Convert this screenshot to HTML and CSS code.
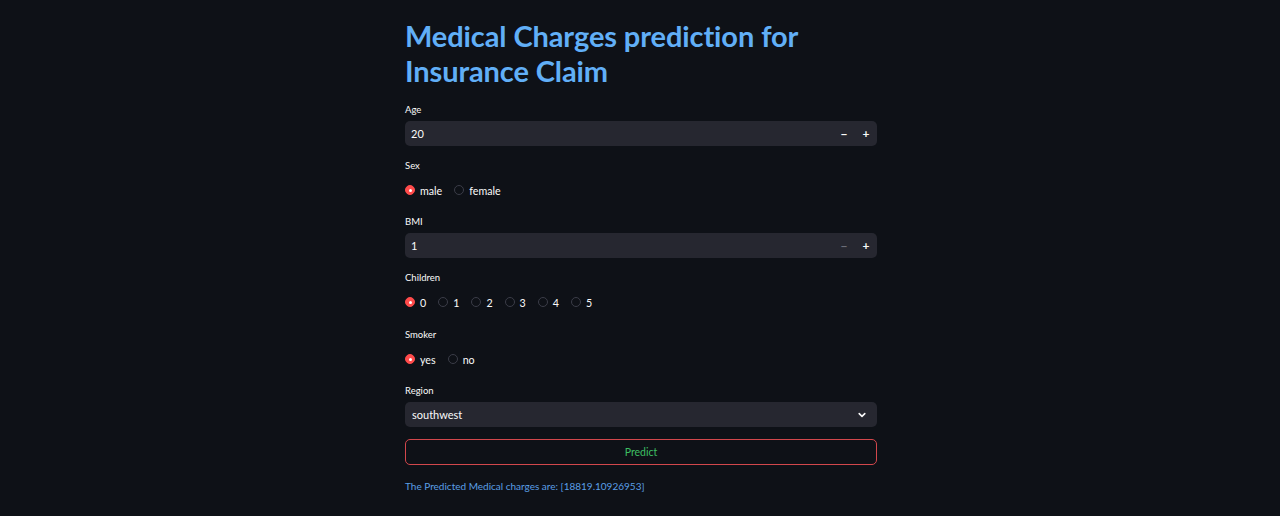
FILE: index.html
```html
<!DOCTYPE html>
<html lang="en">
<head>
<meta charset="utf-8">
<title>Medical Charges prediction</title>
<link rel="stylesheet" href="styles.css">
</head>
<body>
<main class="block">
  <h1 class="title">Medical Charges prediction for Insurance Claim</h1>

  <div class="field">
    <div class="label">Age</div>
    <div class="number">
      <span class="value">20</span>
      <span class="step">&minus;</span>
      <span class="step">+</span>
    </div>
  </div>

  <div class="field radio-field">
    <div class="label">Sex</div>
    <div class="radios">
      <span class="opt"><span class="dot on"></span>male</span>
      <span class="opt"><span class="dot"></span>female</span>
    </div>
  </div>

  <div class="field">
    <div class="label">BMI</div>
    <div class="number">
      <span class="value">1</span>
      <span class="step dim">&minus;</span>
      <span class="step">+</span>
    </div>
  </div>

  <div class="field radio-field wide">
    <div class="label">Children</div>
    <div class="radios">
      <span class="opt"><span class="dot on"></span>0</span>
      <span class="opt"><span class="dot"></span>1</span>
      <span class="opt"><span class="dot"></span>2</span>
      <span class="opt"><span class="dot"></span>3</span>
      <span class="opt"><span class="dot"></span>4</span>
      <span class="opt"><span class="dot"></span>5</span>
    </div>
  </div>

  <div class="field radio-field">
    <div class="label">Smoker</div>
    <div class="radios">
      <span class="opt"><span class="dot on"></span>yes</span>
      <span class="opt"><span class="dot"></span>no</span>
    </div>
  </div>

  <div class="field">
    <div class="label">Region</div>
    <div class="select">
      <span class="value">southwest</span>
      <svg class="chev" width="10" height="10" viewBox="0 0 10 10"><path d="M2.2 3.6 L5 6.4 L7.8 3.6" fill="none" stroke="#fafafa" stroke-width="1.6" stroke-linecap="round" stroke-linejoin="round"/></svg>
    </div>
  </div>

  <button class="predict" type="button">Predict</button>

  <p class="result">The Predicted Medical charges are: [18819.10926953]</p>
</main>
</body>
</html>
```

FILE: styles.css
```css
* { box-sizing: border-box; }
html, body { margin: 0; padding: 0; }
body {
  background: #0e1117;
  color: #fafafa;
  font-family: Lato, "Liberation Sans", sans-serif;
  height: 516px;
  overflow: hidden;
}
.block {
  width: 472px;
  margin-left: 405px;
  padding-top: 18px;
}
.title {
  margin: 0 0 14px 0;
  font-size: 29px;
  line-height: 35px;
  font-weight: 700;
  color: #61aff7;
  letter-spacing: -0.1px;
}
.field { margin-bottom: 12px; }
.radio-field { margin-bottom: 17px; }
.radio-field.wide { margin-bottom: 18px; }
.label {
  font-size: 9.5px;
  line-height: 14px;
  height: 14px;
  padding-top: 1px;
  margin-bottom: 5px;
  color: #fafafa;
}
.radio-field .label { margin-bottom: 11px; }
.number, .select {
  height: 25px;
  background: #262730;
  border-radius: 5px;
  display: flex;
  align-items: center;
  font-size: 11px;
}
.number .value { flex: 1; padding-left: 6px; }
.select .value { flex: 1; padding-left: 7px; }
.step {
  width: 22px;
  text-align: center;
  font-size: 12px;
  font-weight: 700;
  color: #fafafa;
}
.step.dim { color: #6b6d78; }
.chev { margin-right: 10px; }
.radios {
  display: flex;
  gap: 12px;
  height: 14px;
  align-items: center;
  font-size: 10.7px;
}
.opt { display: flex; align-items: center; gap: 5px; }
.dot {
  width: 10px;
  height: 10px;
  border-radius: 50%;
  border: 1px solid #3b3d48;
  background: #0e1117;
  display: inline-block;
}
.dot.on {
  background: #ff4b4b;
  border-color: #ff4b4b;
  position: relative;
}
.dot.on::after {
  content: "";
  position: absolute;
  left: 2.5px; top: 2.5px;
  width: 3px; height: 3px;
  border-radius: 50%;
  background: #ffffff;
}
.predict {
  display: block;
  width: 100%;
  height: 26px;
  background: #0e1117;
  border: 1px solid #d2474c;
  border-radius: 5px;
  color: #3dbf63;
  font-family: inherit;
  font-size: 10.5px;
  margin: 0 0 13px 0;
}
.result {
  margin: 0;
  font-size: 10px;
  line-height: 14px;
  padding-top: 1px;
  color: #5a9fe6;
}
```
